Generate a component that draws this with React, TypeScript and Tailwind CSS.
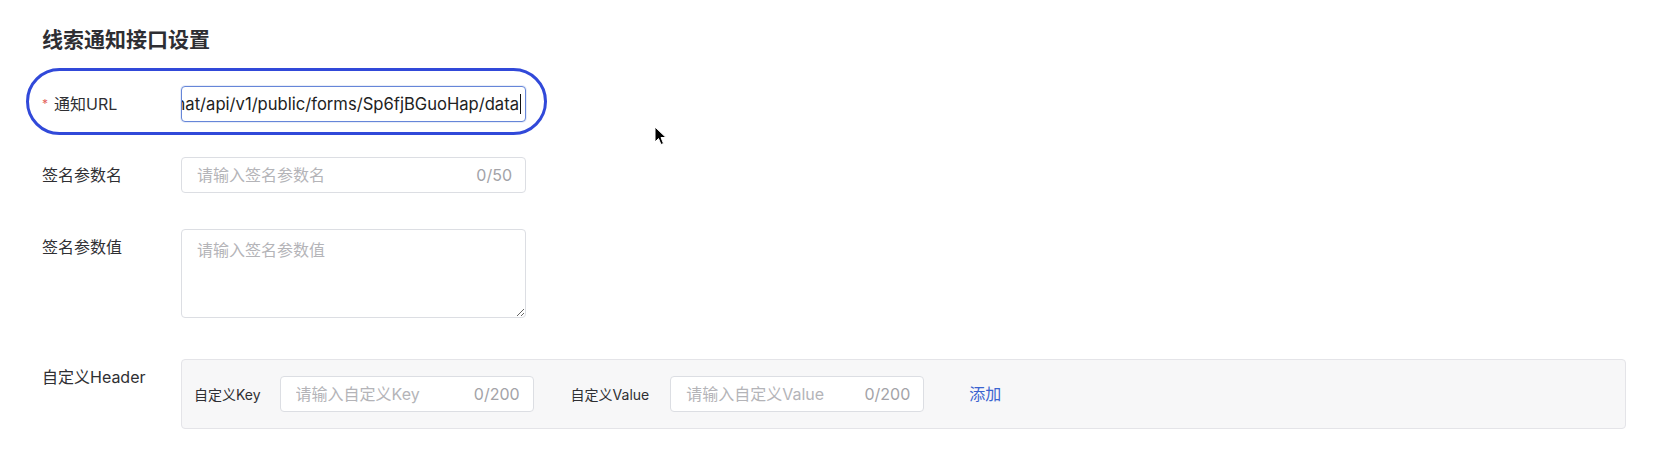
import React from "react";

const font = "font-['Inter','Noto_Sans_CJK_SC',sans-serif]";

function CountInput({ placeholder, count, width }: { placeholder: string; count: string; width: string }) {
  return (
    <div className={`flex h-[36px] items-center rounded-[4px] border border-[#dcdee3] bg-white pl-[15px] pr-[13px] ${width}`}>
      <input
        readOnly
        placeholder={placeholder}
        className="min-w-0 flex-1 bg-transparent text-[16px] text-[#333] outline-none placeholder:text-[#b4b4b8]"
      />
      <span className="text-[16px] text-[#a3a3a8]">{count}</span>
    </div>
  );
}

function Row({ label, required, children, className = "" }: { label: string; required?: boolean; children: React.ReactNode; className?: string }) {
  return (
    <div className={`flex items-start ${className}`}>
      <div className="flex w-[139px] shrink-0 items-center text-[16px] leading-[36px] text-[#2f2f33]">
        {required && <span className="mr-[6px] text-[12px] text-[#e4625d]">*</span>}
        {label}
      </div>
      {children}
    </div>
  );
}

export default function App() {
  return (
    <div className={`relative h-[450px] w-[1656px] overflow-hidden bg-white pl-[42px] pt-[24px] ${font}`}>
      <h2 className="text-[21px] font-semibold leading-[32px] text-[#2e2e33]">线索通知接口设置</h2>

      <Row label="通知URL" required className="mt-[30px]">
        <div className="flex h-[36px] w-[345px] items-center justify-end overflow-hidden rounded-[4px] border border-[#6686d8] bg-white pr-[4px] shadow-[0_0_0_1px_rgba(102,134,216,0.15)]">
          <span className="whitespace-nowrap text-[16.6px] text-[#222]">https://open.chat/api/v1/public/forms/Sp6fjBGuoHap/data</span>
          <span className="ml-[1px] h-[20px] w-[1px] shrink-0 bg-[#111]" />
        </div>
      </Row>

      <Row label="签名参数名" className="mt-[35px]">
        <CountInput placeholder="请输入签名参数名" count="0/50" width="w-[345px]" />
      </Row>

      <Row label="签名参数值" className="mt-[36px]">
        <textarea
          readOnly
          placeholder="请输入签名参数值"
          className="h-[89px] w-[345px] rounded-[4px] border border-[#dcdee3] px-[15px] py-[8px] text-[16px] leading-[24px] outline-none placeholder:text-[#b4b4b8]"
        />
      </Row>

      <Row label="自定义Header" className="mt-[41px]">
        <div className="flex h-[70px] w-[1445px] items-center rounded-[4px] border border-[#e4e4e8] bg-[#f7f7f8] pl-[12px]">
          <span className="mr-[19px] text-[14px] text-[#2f2f33]">自定义Key</span>
          <CountInput placeholder="请输入自定义Key" count="0/200" width="w-[254px]" />
          <span className="ml-[37px] mr-[21px] text-[14px] text-[#2f2f33]">自定义Value</span>
          <CountInput placeholder="请输入自定义Value" count="0/200" width="w-[254px]" />
          <button className="ml-[45px] text-[16px] text-[#3b64d0]">添加</button>
        </div>
      </Row>

      {/* annotation ring */}
      <div className="pointer-events-none absolute left-[26px] top-[68px] h-[67px] w-[521px] rounded-full border-[3px] border-[#3149d9]" />

      {/* mouse pointer */}
      <svg className="absolute left-[654px] top-[126px]" width="14" height="20" viewBox="0 0 14 20">
        <path d="M1 1 L1 16 L4.5 12.5 L7 18.5 L9.5 17.5 L7 11.5 L12 11.5 Z" fill="#000" stroke="#fff" strokeWidth="1" />
      </svg>
    </div>
  );
}
